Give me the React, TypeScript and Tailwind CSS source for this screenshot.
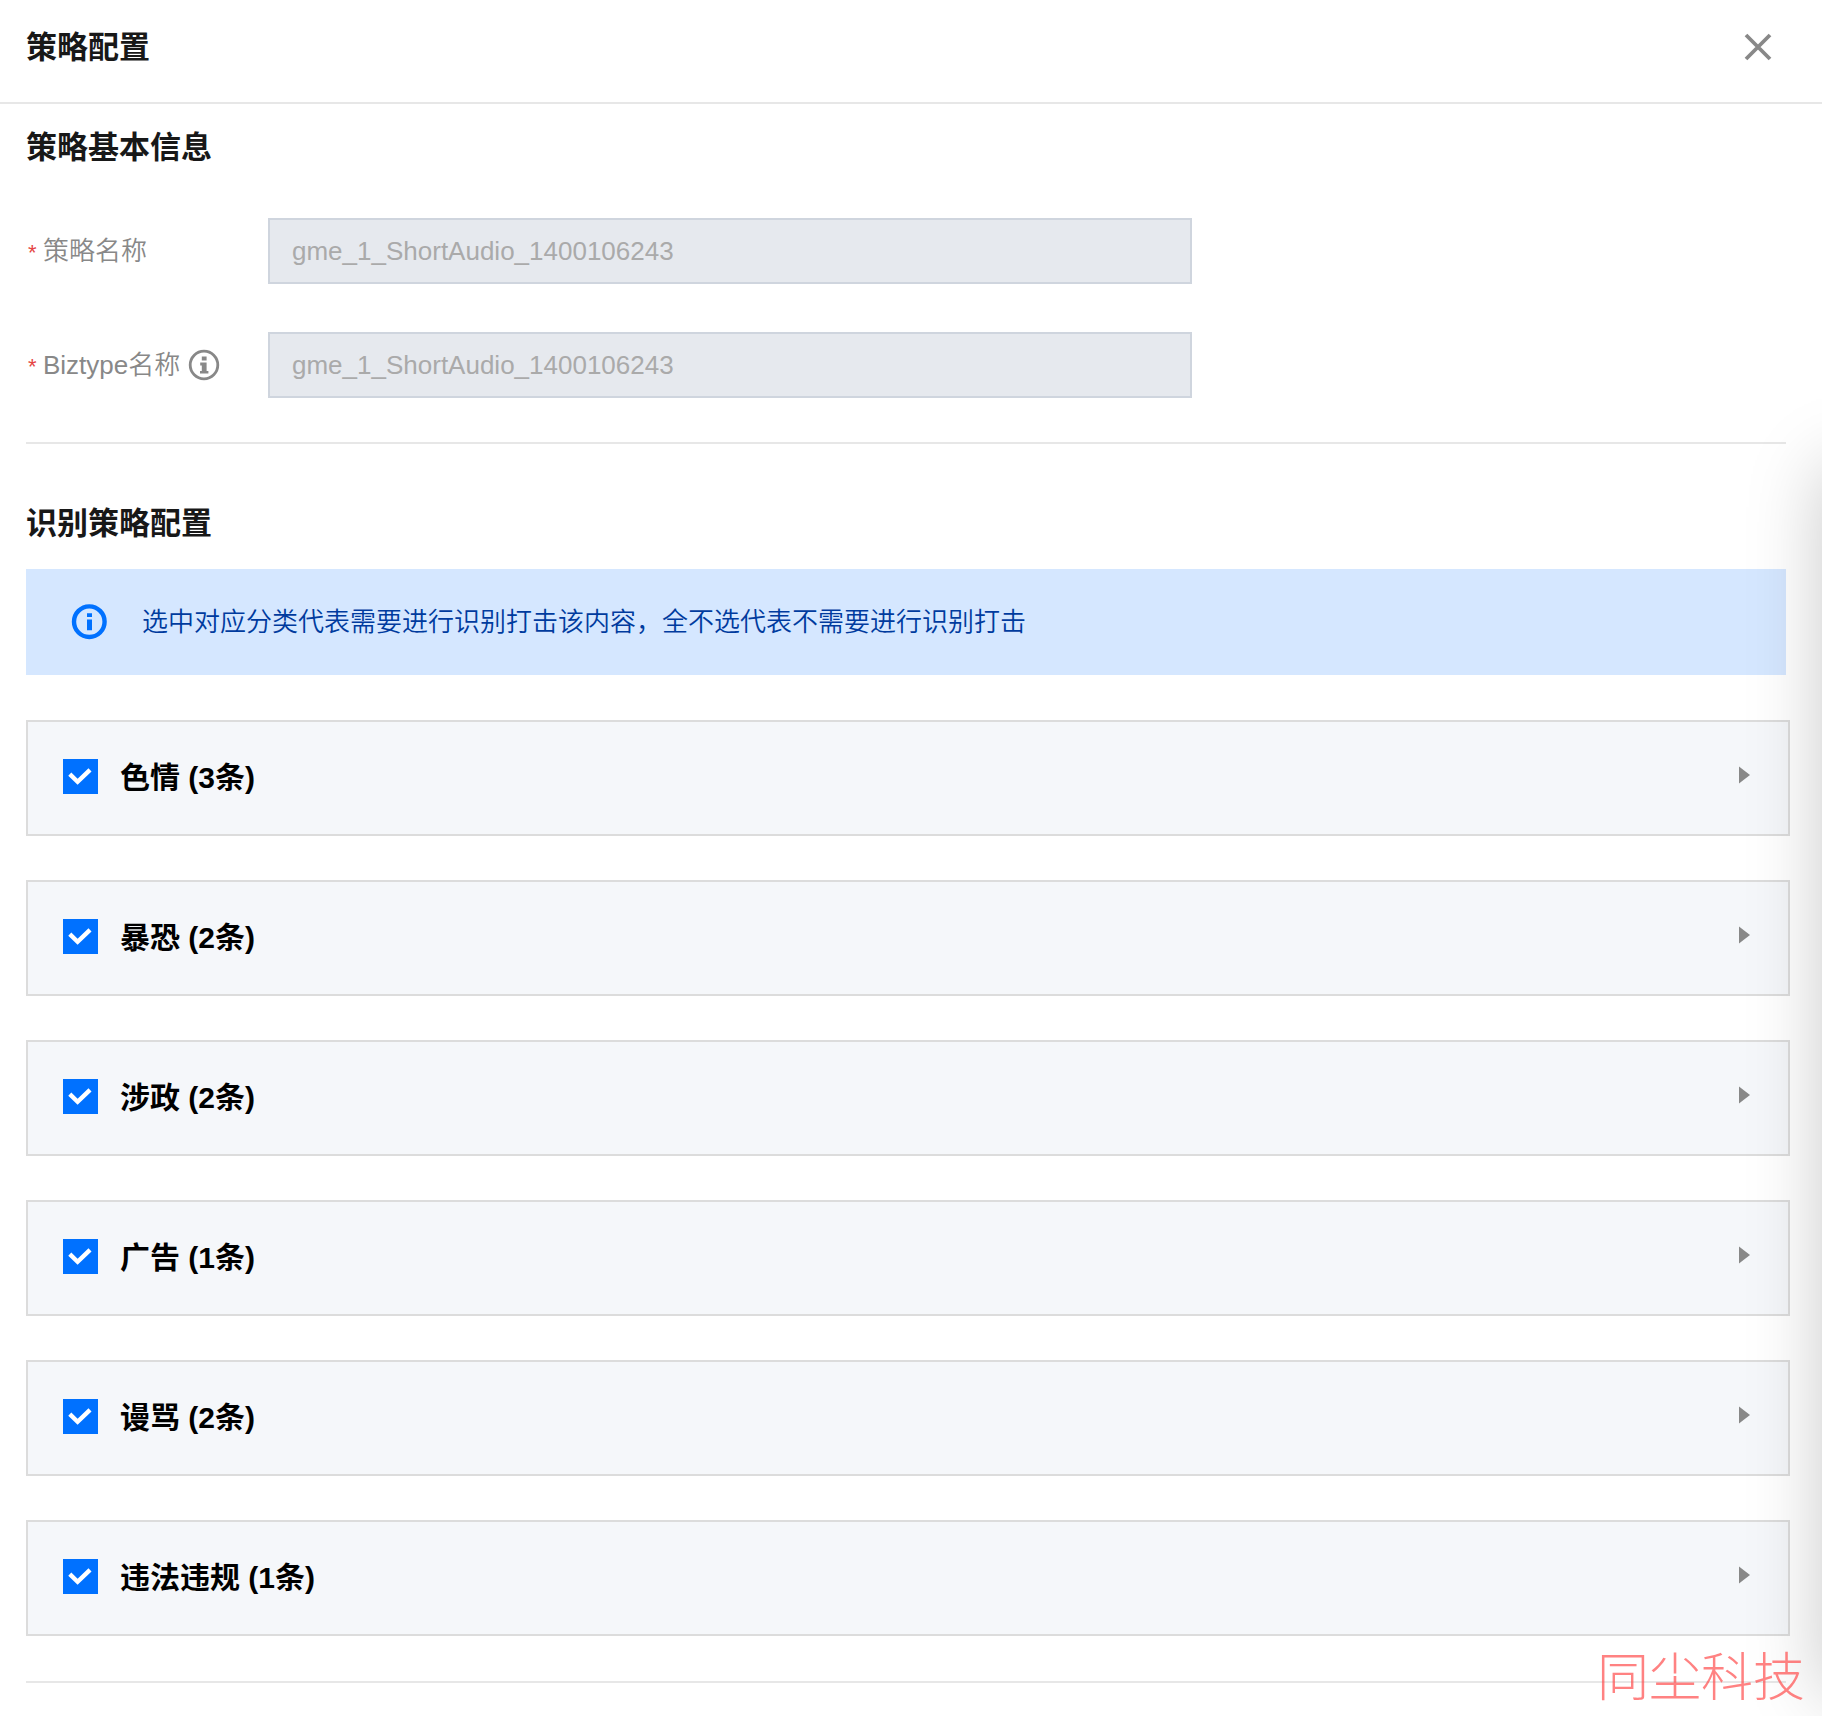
import { useState } from "react";

interface FieldProps {
  id: string;
  label: string;
  value: string;
  hint?: boolean;
}

interface CategoryCardProps {
  name: string;
  count: number;
}

const categories: CategoryCardProps[] = [
  { name: "色情", count: 3 },
  { name: "暴恐", count: 2 },
  { name: "涉政", count: 2 },
  { name: "广告", count: 1 },
  { name: "谩骂", count: 2 },
  { name: "违法违规", count: 1 },
];

function InfoIcon() {
  return (
    <svg viewBox="0 0 36 36" fill="none" className="w-9 h-9 text-[#0071ff]" aria-hidden="true">
      <circle cx="18.3" cy="17.7" r="15.3" stroke="currentColor" strokeWidth="4.4" />
      <path d="M16 9.3h5v3.8h-5zM16 15.4h5v10.8h-5z" fill="currentColor" />
    </svg>
  );
}

function HintIcon() {
  return (
    <svg viewBox="0 0 32 32" fill="none" className="w-8 h-8" aria-hidden="true">
      <circle cx="16" cy="16" r="13.8" stroke="currentColor" strokeWidth="2.8" />
      <path d="M13.8 7.6h4.8v4h-4.8zM12.2 13.6h6.4v8.4h1.8v2.6h-8.4V22h1.8v-5.6h-1.6z" fill="currentColor" />
    </svg>
  );
}

function Field({ id, label, value, hint }: FieldProps) {
  return (
    <div className="flex items-center">
      <div className="w-[242px] flex-shrink-0 flex items-center">
        <span className="w-[17px] pl-[2px] pt-1 text-[22px] leading-[40px] text-[#e54545]">*</span>
        <label htmlFor={id} className="text-[26px] leading-[40px] font-[350] text-[#888]">
          {label}
        </label>
        {hint && (
          <button type="button" aria-label="说明" className="ml-2 text-[#888]">
            <HintIcon />
          </button>
        )}
      </div>
      <input
        id={id}
        type="text"
        disabled
        defaultValue={value}
        className="w-full max-w-[924px] h-[66px] px-[22px] border-2 border-[#cfd5de] bg-[#e6e9ee] text-[26px] text-[#aaa]"
      />
    </div>
  );
}

function CategoryCard({ name, count }: CategoryCardProps) {
  const [open, setOpen] = useState(false);

  return (
    <li className="h-[116px] pl-[35px] pr-[38px] pb-1 flex items-center justify-between border-2 border-[#dcdcdc] bg-[#f5f7fa]">
      <label className="flex items-center gap-[22px]">
        <span className="grid place-items-center">
          <input
            type="checkbox"
            defaultChecked
            className="peer col-start-1 row-start-1 appearance-none w-[35px] h-[35px] border-2 border-[#888] bg-white checked:border-[#0071ff] checked:bg-[#0071ff]"
          />
          <svg viewBox="0 0 35 35" fill="none" className="col-start-1 row-start-1 w-[35px] h-[35px] pointer-events-none hidden peer-checked:block" aria-hidden="true">
            <path d="M6.8 15.2L14.6 22.8L27 10.8" stroke="#fff" strokeWidth="4.4" />
          </svg>
        </span>
        <span className="pt-1 text-[30px] leading-[44px] font-bold text-black">
          {name} ({count}条)
        </span>
      </label>
      <button type="button" aria-label={`展开${name}`} aria-expanded={open} onClick={() => setOpen(!open)} className="pb-[2px]">
        <svg viewBox="0 0 11 18" className={`w-[11px] h-[18px] ${open ? "rotate-90" : ""}`} aria-hidden="true">
          <path d="M0 0.4L11 9L0 17.6z" fill="#888" />
        </svg>
      </button>
    </li>
  );
}

export default function App() {
  return (
    <div className="relative min-h-screen overflow-hidden bg-white font-['Liberation_Sans','Noto_Sans_CJK_SC',sans-serif]">
      <header className="h-[104px] pl-[26px] pr-[50px] pb-2 flex items-center justify-between border-b-2 border-[#e7e7e7]">
        <h1 className="pt-[2px] text-[31px] leading-[44px] font-bold text-[#181818]">策略配置</h1>
        <button type="button" aria-label="关闭" className="text-[#888]">
          <svg viewBox="0 0 28 28" fill="none" className="w-7 h-7" aria-hidden="true">
            <path d="M2 2L26 26M26 2L2 26" stroke="currentColor" strokeWidth="3.8" />
          </svg>
        </button>
      </header>

      <main className="pl-[26px] pr-8">
        <section className="mr-1 pt-[22px] pb-[44px] border-b-2 border-[#e7e7e7]">
          <h2 className="text-[31px] leading-[44px] font-bold text-[#181818]">策略基本信息</h2>
          <div className="mt-12 flex flex-col gap-12">
            <Field id="policy-name" label="策略名称" value="gme_1_ShortAudio_1400106243" />
            <Field id="biz-type" label="Biztype名称" value="gme_1_ShortAudio_1400106243" hint />
          </div>
        </section>

        <section className="pt-[58px]">
          <h2 className="text-[31px] leading-[44px] font-bold text-[#181818]">识别策略配置</h2>
          <div className="mt-[23px] mr-1 h-[106px] pl-[45px] flex items-center bg-[#d5e7ff]">
            <InfoIcon />
            <p className="ml-[35px] text-[26px] leading-[40px] font-[350] text-[#003b9e]">
              选中对应分类代表需要进行识别打击该内容，全不选代表不需要进行识别打击
            </p>
          </div>
          <ul className="mt-[45px] flex flex-col gap-11">
            {categories.map((category) => (
              <CategoryCard key={category.name} {...category} />
            ))}
          </ul>
        </section>
        <hr className="mt-[45px] mr-1 mb-8 border-t-2 border-[#e7e7e7]" />
      </main>

      {/* shadow cast by the side panel docked past the right edge */}
      <div className="pointer-events-none absolute left-full top-[466px] bottom-[20px] w-[300px] shadow-[0_0_70px_rgba(0,0,0,0.21)]" />

      <p className="pointer-events-none absolute right-[17px] bottom-[8px] text-[52px] leading-[60px] font-light text-[#ff4d4d]/70">
        同尘科技
      </p>
    </div>
  );
}
